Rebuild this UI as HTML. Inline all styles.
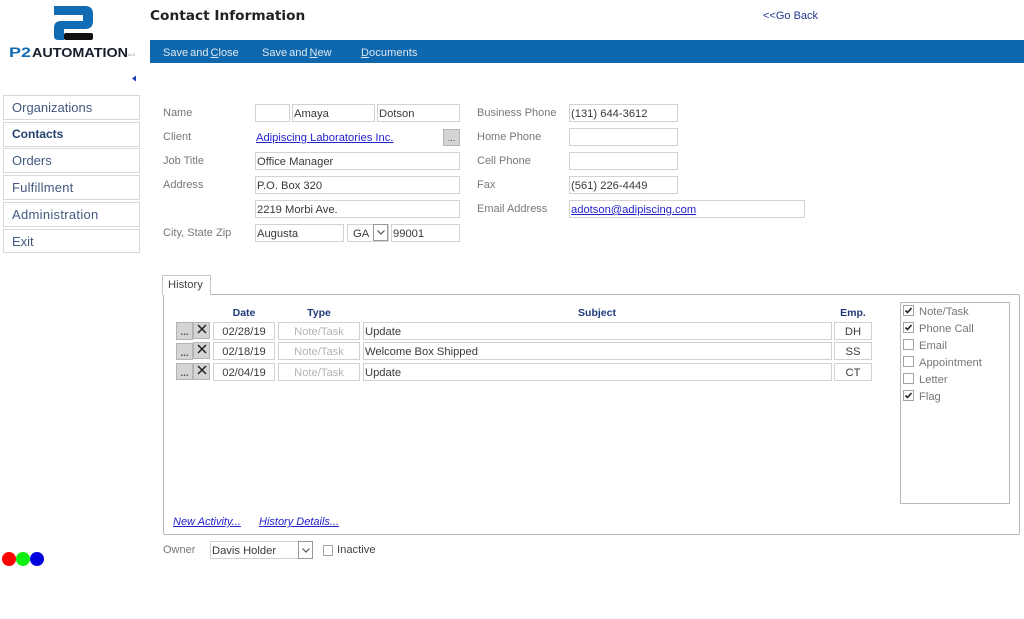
<!DOCTYPE html>
<html><head><meta charset="utf-8"><style>
html,body{margin:0;padding:0;background:#fff;width:1024px;height:619px;overflow:hidden}
body{position:relative;font-family:"Liberation Sans",sans-serif;font-size:11.2px;color:#3a3a3a}
div,span.a,a{position:absolute;box-sizing:border-box;white-space:nowrap}
.l{color:#777;line-height:14px;height:14px;font-size:11px}
.f{border:1px solid #d2d2d2;background:#fff;height:18px;line-height:18px;padding-left:1px;color:#3a3a3a}
.c{text-align:center;padding:0}
.n{left:3px;width:137px;height:25px;border:1px solid #d8d8d8;line-height:23px;padding-left:8px;font-size:13px;color:#41597f}
.h{color:#1f3a7a;font-weight:bold;font-size:10.5px;line-height:12px;height:12px;text-align:center}
.b{background:#d4d4d4;border:1px solid #b4b4b4;color:#444}
.d{font-weight:bold;font-size:10px;text-align:center;line-height:20px;color:#555}
.k{left:903px;width:11px;height:11px;border:1px solid #a4a4a4;background:#fff}
.cl{left:919px;color:#777;line-height:14px;height:14px}
a{color:#2222cc;text-decoration:underline}
.m{top:47px;color:#dce8f3;line-height:13px;font-size:11px;word-spacing:-1px}
.m u{text-decoration:underline}
</style></head><body>

<svg style="position:absolute;left:0;top:0" width="150" height="90" viewBox="0 0 150 90">
<path d="M54 6H85Q93 6 93 14V21Q93 29 85 29H64V40H58Q54 40 54 36V28Q54 21 61 21H83V15H54Z" fill="#0f6cb5"/>
<rect x="64" y="33" width="29" height="7" rx="2" fill="#111"/>
<text x="9" y="57" font-family="Liberation Sans,sans-serif" font-weight="bold" font-size="13.5" fill="#0f6cb5" textLength="22" lengthAdjust="spacingAndGlyphs">P2</text>
<text x="32" y="57" font-family="Liberation Sans,sans-serif" font-weight="bold" font-size="13" fill="#161d2b" textLength="96" lengthAdjust="spacingAndGlyphs">AUTOMATION</text>
<text x="128" y="56" font-family="Liberation Sans,sans-serif" font-size="4" fill="#777">LLC</text>
<path d="M136 75.5V81.5L132 78.5Z" fill="#1b3fb0"/>
</svg>

<div style="left:150px;top:8px;font-family:'DejaVu Sans',sans-serif;font-weight:bold;font-size:13.7px;line-height:17px;color:#222">Contact Information</div>
<div style="left:763px;top:10px;color:#1f3a8a;font-size:11px;line-height:13px">&lt;&lt;Go Back</div>

<div style="left:150px;top:40px;width:874px;height:23px;background:#0f68ae"></div>
<div class="m" style="left:163px">Save and <u>C</u>lose</div>
<div class="m" style="left:262px">Save and <u>N</u>ew</div>
<div class="m" style="left:361px;letter-spacing:.1px"><u>D</u>ocuments</div>

<div class="n" style="top:95px">Organizations</div>
<div class="n" style="top:122px;font-weight:bold;font-size:12px;color:#24406f">Contacts</div>
<div class="n" style="top:148px">Orders</div>
<div class="n" style="top:175px;letter-spacing:.2px">Fulfillment</div>
<div class="n" style="top:202px;letter-spacing:.3px">Administration</div>
<div class="n" style="top:229px;height:24px">Exit</div>

<div class="l" style="left:163px;top:106px">Name</div>
<div class="l" style="left:163px;top:130px">Client</div>
<div class="l" style="left:163px;top:154px">Job Title</div>
<div class="l" style="left:163px;top:178px">Address</div>
<div class="l" style="left:163px;top:226px">City, State Zip</div>

<div class="f" style="left:255px;top:104px;width:35px"></div>
<div class="f" style="left:292px;top:104px;width:83px">Amaya</div>
<div class="f" style="left:377px;top:104px;width:83px">Dotson</div>
<a style="left:256px;top:131px;line-height:14px">Adipiscing Laboratories Inc.</a>
<div class="b" style="left:443px;top:129px;width:17px;height:17px;text-align:center;font-size:9px;line-height:17px">...</div>
<div class="f" style="left:255px;top:152px;width:205px">Office Manager</div>
<div class="f" style="left:255px;top:176px;width:205px">P.O. Box 320</div>
<div class="f" style="left:255px;top:200px;width:205px">2219 Morbi Ave.</div>
<div class="f" style="left:255px;top:224px;width:89px">Augusta</div>
<div class="f" style="left:347px;top:224px;width:42px;padding-left:5px">GA</div>
<div style="left:373px;top:224px;width:15px;height:17px;border:1px solid #999;background:#fff"><svg style="position:absolute;left:3px;top:5px" width="8" height="5"><path d="M0.5 0.5L4 4L7.5 0.5" fill="none" stroke="#555" stroke-width="1.2"/></svg></div>
<div class="f" style="left:391px;top:224px;width:69px">99001</div>

<div class="l" style="left:477px;top:106px">Business Phone</div>
<div class="l" style="left:477px;top:130px">Home Phone</div>
<div class="l" style="left:477px;top:154px">Cell Phone</div>
<div class="l" style="left:477px;top:178px">Fax</div>
<div class="l" style="left:477px;top:202px">Email Address</div>
<div class="f" style="left:569px;top:104px;width:109px">(131) 644-3612</div>
<div class="f" style="left:569px;top:128px;width:109px"></div>
<div class="f" style="left:569px;top:152px;width:109px"></div>
<div class="f" style="left:569px;top:176px;width:109px">(561) 226-4449</div>
<div class="f" style="left:569px;top:200px;width:236px"><span style="color:#2222cc;text-decoration:underline">adotson@adipiscing.com</span></div>

<div style="left:163px;top:294px;width:857px;height:241px;border:1px solid #b8b8b8;border-radius:2px"></div>
<div style="left:162px;top:275px;width:49px;height:20px;border:1px solid #c8c8c8;border-bottom:0;background:#fff;line-height:18px;padding-left:5px;color:#444">History</div>

<div class="h" style="left:213px;top:307px;width:62px">Date</div>
<div class="h" style="left:278px;top:307px;width:82px">Type</div>
<div class="h" style="left:363px;top:307px;width:468px">Subject</div>
<div class="h" style="left:834px;top:307px;width:38px">Emp.</div>

<div class="b d" style="left:176px;top:322px;width:17px;height:18px">...</div>
<div class="b" style="left:193px;top:322px;width:17px;height:17px"><svg style="position:absolute;left:2px;top:0" width="12" height="12"><path d="M2 2L10 10M10 2L2 10" stroke="#222" stroke-width="1.5"/></svg></div>
<div class="f c" style="left:213px;top:322px;width:62px">02/28/19</div>
<div class="f c" style="left:278px;top:322px;width:82px;color:#b4b4b4">Note/Task</div>
<div class="f" style="left:363px;top:322px;width:469px">Update</div>
<div class="f c" style="left:834px;top:322px;width:38px">DH</div>

<div class="b d" style="left:176px;top:343px;width:17px;height:17px">...</div>
<div class="b" style="left:193px;top:342px;width:17px;height:17px"><svg style="position:absolute;left:2px;top:0" width="12" height="12"><path d="M2 2L10 10M10 2L2 10" stroke="#222" stroke-width="1.5"/></svg></div>
<div class="f c" style="left:213px;top:342px;width:62px">02/18/19</div>
<div class="f c" style="left:278px;top:342px;width:82px;color:#b4b4b4">Note/Task</div>
<div class="f" style="left:363px;top:342px;width:469px">Welcome Box Shipped</div>
<div class="f c" style="left:834px;top:342px;width:38px">SS</div>

<div class="b d" style="left:176px;top:363px;width:17px;height:17px">...</div>
<div class="b" style="left:193px;top:363px;width:17px;height:17px"><svg style="position:absolute;left:2px;top:0" width="12" height="12"><path d="M2 2L10 10M10 2L2 10" stroke="#222" stroke-width="1.5"/></svg></div>
<div class="f c" style="left:213px;top:363px;width:62px">02/04/19</div>
<div class="f c" style="left:278px;top:363px;width:82px;color:#b4b4b4">Note/Task</div>
<div class="f" style="left:363px;top:363px;width:469px">Update</div>
<div class="f c" style="left:834px;top:363px;width:38px">CT</div>

<div style="left:900px;top:302px;width:110px;height:202px;border:1px solid #b8b8b8"></div>
<div class="k" style="top:305px"><svg style="position:absolute;left:0;top:0" width="9" height="9"><path d="M1.5 4.5L3.5 6.5L7.5 2" fill="none" stroke="#222" stroke-width="1.6"/></svg></div>
<div class="k" style="top:322px"><svg style="position:absolute;left:0;top:0" width="9" height="9"><path d="M1.5 4.5L3.5 6.5L7.5 2" fill="none" stroke="#222" stroke-width="1.6"/></svg></div>
<div class="k" style="top:339px"></div>
<div class="k" style="top:356px"></div>
<div class="k" style="top:373px"></div>
<div class="k" style="top:390px"><svg style="position:absolute;left:0;top:0" width="9" height="9"><path d="M1.5 4.5L3.5 6.5L7.5 2" fill="none" stroke="#222" stroke-width="1.6"/></svg></div>
<div class="cl" style="top:305px">Note/Task</div>
<div class="cl" style="top:322px">Phone Call</div>
<div class="cl" style="top:339px">Email</div>
<div class="cl" style="top:356px">Appointment</div>
<div class="cl" style="top:373px">Letter</div>
<div class="cl" style="top:390px">Flag</div>

<a style="left:173px;top:515px;line-height:14px;font-style:italic;font-size:11px">New Activity...</a>
<a style="left:259px;top:515px;line-height:14px;font-style:italic;font-size:11px">History Details...</a>

<div class="l" style="left:163px;top:543px">Owner</div>
<div class="f" style="left:210px;top:541px;width:89px">Davis Holder</div>
<div style="left:298px;top:541px;width:15px;height:18px;border:1px solid #999;background:#fff"><svg style="position:absolute;left:3px;top:6px" width="8" height="5"><path d="M0.5 0.5L4 4L7.5 0.5" fill="none" stroke="#555" stroke-width="1.2"/></svg></div>
<div style="left:323px;top:545px;width:10px;height:11px;border:1px solid #a4a4a4"></div>
<div style="left:337px;top:543px;line-height:14px;color:#444">Inactive</div>

<div style="left:2px;top:552px;width:14px;height:14px;border-radius:50%;background:#f00"></div>
<div style="left:16px;top:552px;width:14px;height:14px;border-radius:50%;background:#1e1"></div>
<div style="left:30px;top:552px;width:14px;height:14px;border-radius:50%;background:#00d"></div>
</body></html>
